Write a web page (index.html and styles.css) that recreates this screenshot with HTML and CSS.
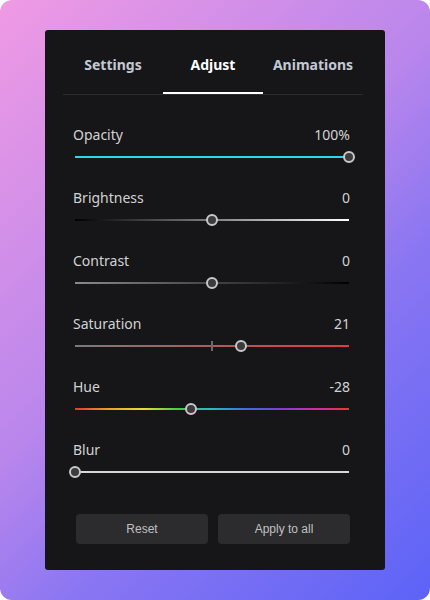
FILE: index.html
```html
<!DOCTYPE html>
<html>
<head>
<meta charset="utf-8">
<link rel="stylesheet" href="styles.css">
</head>
<body>
<div class="bg">
  <div class="panel">
    <div class="tabs">
      <div class="tab">Settings</div>
      <div class="tab active">Adjust</div>
      <div class="tab">Animations</div>
    </div>
    <div class="sliders">
      <div class="row">
        <div class="head"><span>Opacity</span><span>100%</span></div>
        <div class="track"><div class="line opacity"></div><div class="thumb" style="left:100%"></div></div>
      </div>
      <div class="row">
        <div class="head"><span>Brightness</span><span>0</span></div>
        <div class="track"><div class="line brightness"></div><div class="thumb" style="left:50%"></div></div>
      </div>
      <div class="row">
        <div class="head"><span>Contrast</span><span>0</span></div>
        <div class="track"><div class="line contrast"></div><div class="thumb" style="left:50%"></div></div>
      </div>
      <div class="row">
        <div class="head"><span>Saturation</span><span>21</span></div>
        <div class="track"><div class="line saturation"></div><div class="mark"></div><div class="thumb" style="left:60.5%"></div></div>
      </div>
      <div class="row">
        <div class="head"><span>Hue</span><span>-28</span></div>
        <div class="track"><div class="line hue"></div><div class="thumb" style="left:42.2%"></div></div>
      </div>
      <div class="row">
        <div class="head"><span>Blur</span><span>0</span></div>
        <div class="track"><div class="line blur"></div><div class="thumb" style="left:0%"></div></div>
      </div>
    </div>
    <div class="buttons">
      <button class="btn">Reset</button>
      <button class="btn">Apply to all</button>
    </div>
  </div>
</div>
</body>
</html>
```
FILE: styles.css
```css
html, body {
  margin: 0;
  padding: 0;
  background: #ffffff;
}
.bg {
  width: 430px;
  height: 600px;
  border-radius: 12px;
  background: linear-gradient(135deg, #f09ae4 0%, #b986ec 45%, #8a76f2 65%, #5c63f7 100%);
  padding: 30px 45px;
  box-sizing: border-box;
}
.panel {
  background: #161618;
  border-radius: 3px;
  height: 540px;
  padding: 0 22px 0 18px;
  box-sizing: border-box;
  font-family: "Noto Sans", "DejaVu Sans", sans-serif;
}
.tabs {
  display: flex;
  border-bottom: 1px solid #2b2b2e;
  padding-top: 25px;
}
.tab {
  flex: 1;
  text-align: center;
  font-size: 14px;
  font-weight: 700;
  line-height: 20px;
  color: #c3c9d4;
  padding-bottom: 17px;
  border-bottom: 2px solid transparent;
}
.tab.active {
  color: #ffffff;
  border-bottom-color: #ffffff;
}
.sliders {
  padding: 30px 13px 0 10px;
  display: flex;
  flex-direction: column;
  gap: 25px;
}
.head {
  display: flex;
  justify-content: space-between;
  font-size: 14px;
  line-height: 20px;
  color: #d2d2d4;
}
.track {
  position: relative;
  height: 12px;
  margin: 6px 1px 0 2px;
}
.line {
  position: absolute;
  left: 0;
  right: 0;
  top: 5px;
  height: 2px;
}
.opacity { background: #2fd6ea; }
.brightness { background: linear-gradient(90deg, #000000, #ffffff); }
.contrast { background: linear-gradient(90deg, #8a8a8a, #000000); }
.saturation { background: linear-gradient(90deg, #7a7a7a, #e23b3b); }
.hue { background: linear-gradient(90deg, #e53935, #f0a020, #e6e030, #3ccf4e, #2ab7c8, #3a6ee0, #7a3fd8, #d02aa8, #e53935); }
.blur { background: #d8d8d8; }
.mark {
  position: absolute;
  left: 50%;
  top: 1px;
  width: 2px;
  height: 10px;
  margin-left: -1px;
  background: #6a6a6a;
}
.thumb {
  position: absolute;
  top: 0;
  width: 8px;
  height: 8px;
  margin-left: -6px;
  border-radius: 50%;
  border: 2px solid #c8c8ca;
  background: #3c3c3f;
}
.buttons {
  display: flex;
  gap: 10px;
  padding: 36px 13px 0 13px;
}
.btn {
  flex: 1;
  height: 30px;
  border: none;
  border-radius: 4px;
  background: #2c2c2e;
  color: #c0c0c2;
  font-family: "Liberation Sans", Arial, sans-serif;
  font-size: 12px;
}
```
